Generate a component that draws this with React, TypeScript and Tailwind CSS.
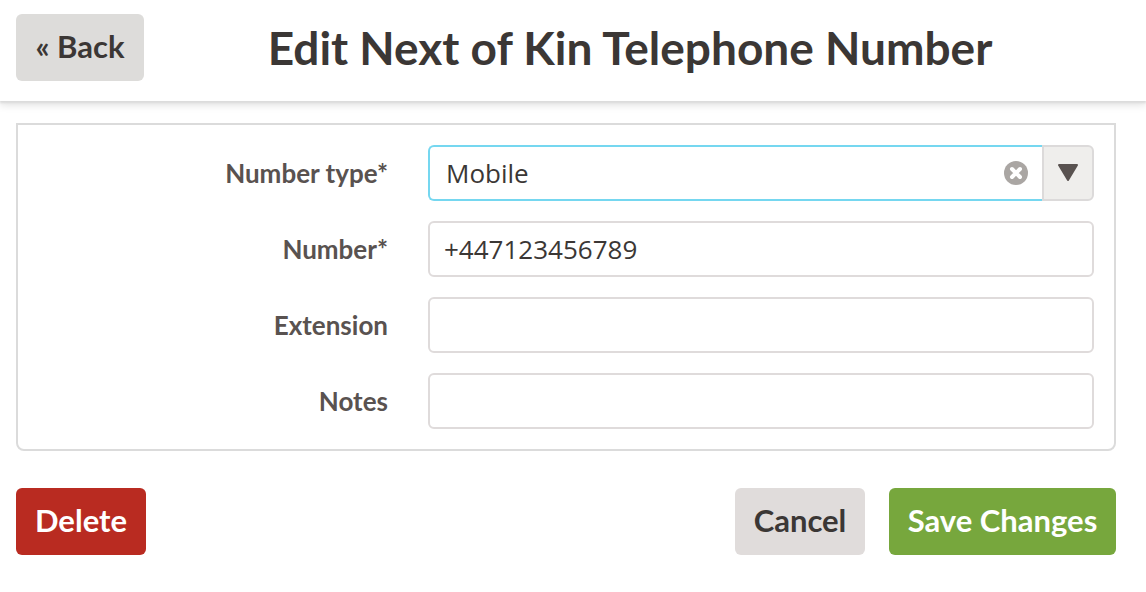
import { useState } from "react";

const rowClass = "flex items-center gap-[38px]";
const labelClass = "w-1/3 shrink-0 pr-0.5 text-right text-[26px] leading-8 font-bold text-[#595250]";
const inputText = "font-['Open_Sans','Noto_Sans',sans-serif] text-[26px] text-[#3b3735] outline-none";
const fieldClass = `h-14 min-w-0 flex-1 rounded-md border-2 border-[#dfdbdb] bg-white px-3.5 ${inputText}`;

export default function App() {
  const [type, setType] = useState("Mobile");

  return (
    <div className="min-h-screen bg-white font-['Lato',sans-serif] text-[#3b3735]">
      <header className="flex items-start px-4 pt-3.5 pb-5 shadow-[0_2px_2px_#dbdbdb,0_4px_8px_rgba(0,0,0,0.12)]">
        <button type="button" className="h-[67px] w-32 shrink-0 rounded-md bg-[#dddcda] pb-0.5 text-[31px] font-bold">
          « Back
        </button>
        <h1 className="flex-1 pr-3.5 text-center text-[46px] leading-[67px] font-bold">
          Edit Next of Kin Telephone Number
        </h1>
      </header>

      <form className="pt-[22px] pr-[30px] pl-4" onSubmit={(e) => e.preventDefault()}>
        <div className="flex flex-col gap-5 rounded-b-lg border-2 border-[#dbdbdb] p-5">
          <div className={rowClass}>
            <label htmlFor="type" className={labelClass}>
              Number type*
            </label>
            <div className="flex h-14 min-w-0 flex-1">
              <div className="flex min-w-0 flex-1 items-center rounded-l-md border-2 border-r-0 border-[#75d7f0] pr-3.5 pl-4">
                <input
                  id="type"
                  value={type}
                  onChange={(e) => setType(e.target.value)}
                  className={`min-w-0 flex-1 bg-transparent ${inputText}`}
                />
                <button type="button" aria-label="Clear" onClick={() => setType("")}>
                  <svg className="block size-6" viewBox="0 0 24 24">
                    <circle cx="12" cy="12" r="12" fill="#aaa6a3" />
                    <path d="M8 8l8 8m0-8l-8 8" stroke="#fff" strokeWidth="4" strokeLinecap="round" />
                  </svg>
                </button>
              </div>
              <button
                type="button"
                aria-label="Show number types"
                className="flex w-[52px] items-center justify-center rounded-r-md border-2 border-[#dcdada] bg-[#efeeec]"
              >
                <svg className="h-[18px] w-5" viewBox="0 0 20 18">
                  <path
                    d="M1 1h18l-9 15z"
                    fill="#595250"
                    stroke="#595250"
                    strokeWidth="2"
                    strokeLinejoin="round"
                  />
                </svg>
              </button>
            </div>
          </div>
          <div className={rowClass}>
            <label htmlFor="number" className={labelClass}>
              Number*
            </label>
            <input id="number" type="tel" defaultValue="+447123456789" className={fieldClass} />
          </div>
          <div className={rowClass}>
            <label htmlFor="extension" className={labelClass}>
              Extension
            </label>
            <input id="extension" className={fieldClass} />
          </div>
          <div className={rowClass}>
            <label htmlFor="notes" className={labelClass}>
              Notes
            </label>
            <input id="notes" className={fieldClass} />
          </div>
        </div>

        <div className="mt-[37px] flex h-[67px] text-[31px] font-bold">
          <button type="button" className="w-[130px] rounded-md bg-[#b92b21] pb-0.5 text-white">
            Delete
          </button>
          <button type="button" className="ml-auto w-[130px] rounded-md bg-[#e0dcdb] pb-0.5">
            Cancel
          </button>
          <button type="submit" className="ml-6 w-[227px] rounded-md bg-[#77a73d] pb-0.5 text-white">
            Save Changes
          </button>
        </div>
      </form>
    </div>
  );
}
